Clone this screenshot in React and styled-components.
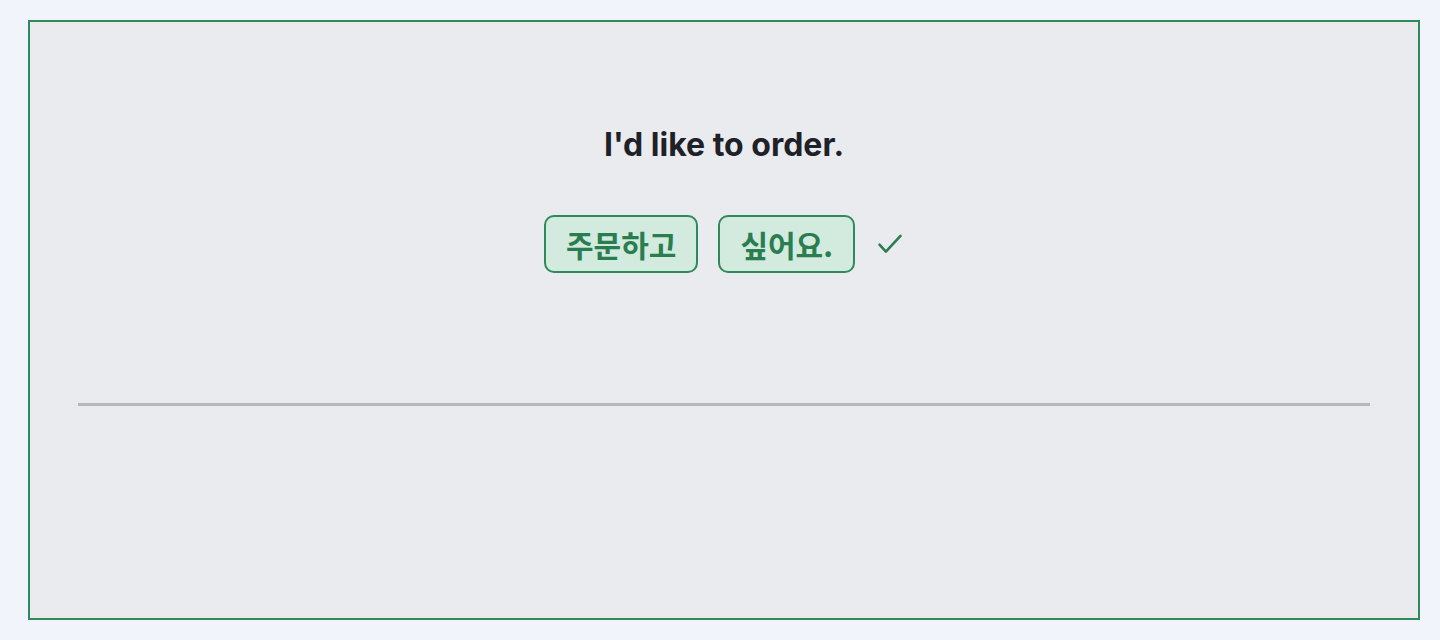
import React from "react";
import styled, { createGlobalStyle } from "styled-components";

const GlobalStyle = createGlobalStyle`
  html, body {
    margin: 0;
    padding: 0;
    background: #f1f4fb;
    font-family: Inter, "Noto Sans CJK KR", sans-serif;
  }
`;

const Page = styled.div`
  padding: 20px 20px 20px 28px;
  height: 640px;
  box-sizing: border-box;
`;

const Card = styled.div`
  width: 1392px;
  height: 600px;
  box-sizing: border-box;
  border: 2px solid #2f8a5b;
  background: #e9ebef;
  padding: 0 48px;
  display: flex;
  flex-direction: column;
  align-items: center;
`;

const Prompt = styled.h2`
  margin: 103px 0 0;
  font-size: 32px;
  line-height: 40px;
  font-weight: 700;
  color: #1f2128;
`;

const Answer = styled.div`
  display: flex;
  align-items: center;
  gap: 20px;
  margin-top: 50px;
`;

const Chip = styled.span`
  display: inline-flex;
  align-items: center;
  height: 58px;
  box-sizing: border-box;
  padding: 0 20px;
  border: 2px solid #2f8a5b;
  border-radius: 10px;
  background: #d3eadf;
  color: #2a7d4f;
  font-family: "Noto Sans CJK KR", sans-serif;
  font-size: 30px;
  font-weight: 700;
`;

const Check = styled.svg`
  width: 28px;
  height: 28px;
  margin-left: 1px;
  color: #2a7d4f;
`;

const Divider = styled.hr`
  align-self: stretch;
  margin: 130px 0 0;
  border: none;
  height: 3px;
  background: #b4b8be;
`;

export default function App() {
  return (
    <>
      <GlobalStyle />
      <Page>
        <Card>
          <Prompt>I'd like to order.</Prompt>
          <Answer>
            <Chip>주문하고</Chip>
            <Chip>싶어요.</Chip>
            <Check viewBox="0 0 24 24" fill="none" stroke="currentColor" strokeWidth="2.2" strokeLinecap="round" strokeLinejoin="round">
              <polyline points="3,12.5 8.5,18.5 21,5" />
            </Check>
          </Answer>
          <Divider />
        </Card>
      </Page>
    </>
  );
}
